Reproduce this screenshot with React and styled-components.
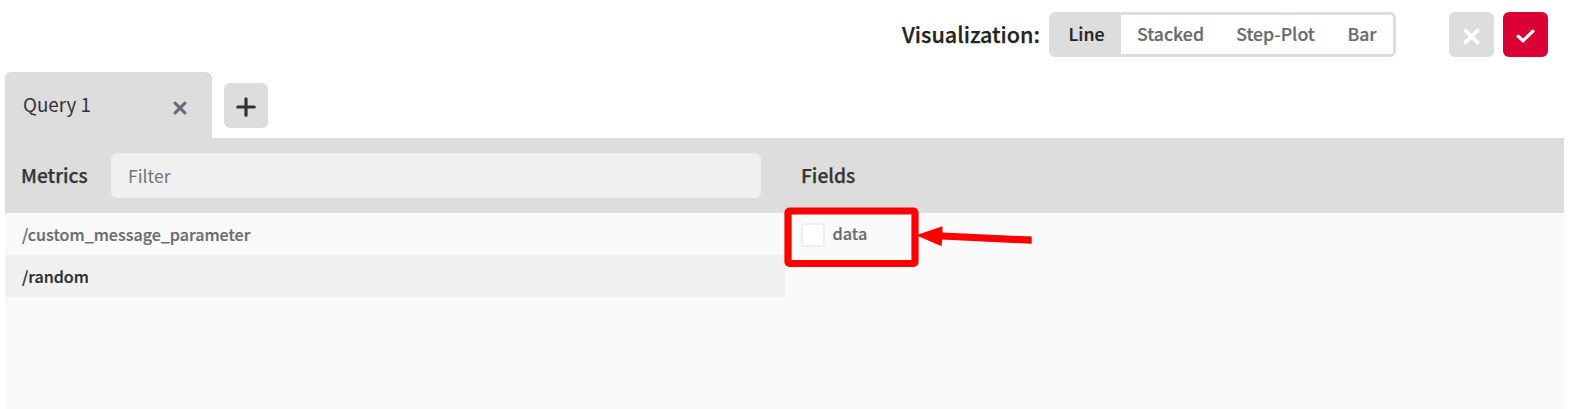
import React from "react";
import styled, { createGlobalStyle } from "styled-components";

const Global = createGlobalStyle`
  * { box-sizing: border-box; }
  body {
    margin: 0;
    background: #fff;
    font-family: "Noto Sans CJK SC", "Noto Sans", sans-serif;
    color: #333436;
    overflow: hidden;
  }
  button, input { font: inherit; color: inherit; border: 0; padding: 0; margin: 0; }
`;

const Page = styled.div`
  height: 409px;
  padding-left: 5px;
  padding-right: 9px;
  display: flex;
  flex-direction: column;
`;

const Toolbar = styled.header`
  display: flex;
  justify-content: flex-end;
  align-items: center;
  height: 72px;
  padding: 12px 16px 15px 0;
`;

const ToolbarLabel = styled.span`
  font-size: 21.6px;
  font-weight: 500;
  line-height: 44px;
  color: #232323;
  margin-right: 9px;
  padding-bottom: 1px;
  -webkit-text-stroke: 0.25px currentColor;
`;

const Segments = styled.div`
  display: flex;
  width: 347px;
  height: 45px;
  border: 3px solid #dddddd;
  border-radius: 6px;
  overflow: hidden;
  margin-right: 53px;
`;

const Segment = styled.button`
  flex: none;
  width: ${(p) => p.$width}px;
  font-size: 17.7px;
  font-weight: 500;
  line-height: 36px;
  padding-bottom: 3px;
  background: ${(p) => (p.$active ? "#dddddd" : "#fff")};
  color: ${(p) => (p.$active ? "#232323" : "#6b6b6b")};
  -webkit-text-stroke: 0.2px currentColor;
`;

const IconButton = styled.button`
  flex: none;
  display: grid;
  place-items: center;
  width: ${(p) => p.$width || 45}px;
  height: 45px;
  border-radius: 6px;
  background: ${(p) => (p.$primary ? "#da0035" : "#dddddd")};
  color: ${(p) => p.$color || "#fff"};
`;

const Mark = styled.span`
  display: flex;
  padding-top: ${(p) => p.$drop}px;
`;

const Actions = styled.div`
  display: flex;
  gap: 9px;
`;

const Tabs = styled.nav`
  display: flex;
  height: 66px;
  gap: 12px;
`;

const Tab = styled.div`
  display: flex;
  align-items: center;
  justify-content: space-between;
  width: 207px;
  height: 66px;
  padding: 0 25px 0 18px;
  border-radius: 6px 6px 0 0;
  background: #dddddd;
`;

const TabTitle = styled.span`
  font-size: 18.8px;
  line-height: 30px;
  padding-bottom: 3px;
`;

const CloseSlot = styled.span`
  display: flex;
  color: #656a7b;
  padding-top: 5px;
`;

const AddSlot = styled.div`
  padding-top: 11px;
`;

const Panel = styled.main`
  flex: 1;
  display: grid;
  grid-template-columns: 780px 1fr;
  background: #fafafa;
`;

const ColumnHeader = styled.div`
  display: flex;
  align-items: center;
  height: 75px;
  padding: 0 24px 0 16px;
  background: #dddddd;
`;

const Heading = styled.h2`
  margin: 0;
  width: 90px;
  font-size: 19.2px;
  font-weight: 500;
  line-height: 30px;
  padding-bottom: 2px;
  -webkit-text-stroke: 0.25px currentColor;
`;

const Filter = styled.input`
  flex: 1;
  height: 45px;
  padding: 0 17px 1px;
  border-radius: 6px;
  font-size: 17.6px;
  background: #f0f0f0;
  outline: none;
  &::placeholder { color: #757575; opacity: 1; }
`;

const MetricRow = styled.div`
  height: 42px;
  padding-left: 17px;
  font-size: 16.1px;
  font-weight: 500;
  line-height: 42px;
  background: ${(p) => (p.$active ? "#f0f0f0" : "transparent")};
  color: ${(p) => (p.$active ? "#2b2b2c" : "#6b6b6b")};
  -webkit-text-stroke: 0.2px currentColor;
`;

const FieldArea = styled.div`
  position: relative;
`;

const FieldRow = styled.label`
  display: flex;
  align-items: center;
  gap: 7.5px;
  height: 44px;
  padding-left: 16px;
  font-size: 16.3px;
  font-weight: 500;
  color: #6b6b6b;
  -webkit-text-stroke: 0.2px currentColor;
`;

const FieldName = styled.span`
  line-height: 24px;
  padding-bottom: 4px;
`;

const Checkbox = styled.span`
  width: 24px;
  height: 24px;
  border: 2px solid #efefef;
  border-radius: 4px;
  background: #fff;
`;

const Callout = styled.svg`
  position: absolute;
  left: -5px;
  top: -10px;
  pointer-events: none;
`;

function Cross({ size, width }) {
  return (
    <svg width={size} height={size} viewBox="0 0 16 16" fill="none" stroke="currentColor" strokeWidth={width} strokeLinecap="round">
      <path d="M2.4 2.4 13.6 13.6M13.6 2.4 2.4 13.6" />
    </svg>
  );
}

function Check() {
  return (
    <svg width="20" height="18" viewBox="0 0 20 18" fill="none" stroke="currentColor" strokeWidth="3.2">
      <path d="M2.1 9.3 7.1 13.7 17 4.1" strokeLinecap="round" />
    </svg>
  );
}

function Plus() {
  return (
    <svg width="20" height="20" viewBox="0 0 20 20" fill="none" stroke="currentColor" strokeWidth="3.2" strokeLinecap="round">
      <path d="M10 1.8V18.2M1.8 10H18.2" />
    </svg>
  );
}

const modes = [
  ["Line", 69],
  ["Stacked", 99],
  ["Step-Plot", 111],
  ["Bar", 62],
];
const metrics = ["/custom_message_parameter", "/random"];

export default function App() {
  return (
    <>
      <Global />
      <Page>
        <Toolbar>
          <ToolbarLabel>Visualization:</ToolbarLabel>
          <Segments>
            {modes.map(([name, width]) => (
              <Segment key={name} $width={width} $active={name === "Line"}>{name}</Segment>
            ))}
          </Segments>
          <Actions>
            <IconButton aria-label="Cancel">
              <Mark $drop={3}><Cross size={17} width={3.6} /></Mark>
            </IconButton>
            <IconButton aria-label="Apply" $primary>
              <Mark $drop={2}><Check /></Mark>
            </IconButton>
          </Actions>
        </Toolbar>
        <Tabs>
          <Tab>
            <TabTitle>Query 1</TabTitle>
            <CloseSlot><Cross size={14} width={3.4} /></CloseSlot>
          </Tab>
          <AddSlot>
            <IconButton aria-label="Add query" $width={44} $color="#333333">
              <Mark $drop={3}><Plus /></Mark>
            </IconButton>
          </AddSlot>
        </Tabs>
        <Panel>
          <section>
            <ColumnHeader>
              <Heading>Metrics</Heading>
              <Filter placeholder="Filter" />
            </ColumnHeader>
            {metrics.map((name) => (
              <MetricRow key={name} $active={name === "/random"}>{name}</MetricRow>
            ))}
          </section>
          <section>
            <ColumnHeader>
              <Heading>Fields</Heading>
            </ColumnHeader>
            <FieldArea>
              <FieldRow>
                <Checkbox />
                <FieldName>data</FieldName>
              </FieldRow>
              <Callout width="260" height="70" viewBox="0 0 260 70">
                <rect x="8" y="8" width="127" height="52.5" rx="1.5" fill="none" stroke="#f00" strokeWidth="7.2" />
                <path d="M136 32.2 162.5 23.3V29.6L251.7 33.5V40.8L162.2 36.6 161.6 43.3Z" fill="#f00" />
              </Callout>
            </FieldArea>
          </section>
        </Panel>
      </Page>
    </>
  );
}
